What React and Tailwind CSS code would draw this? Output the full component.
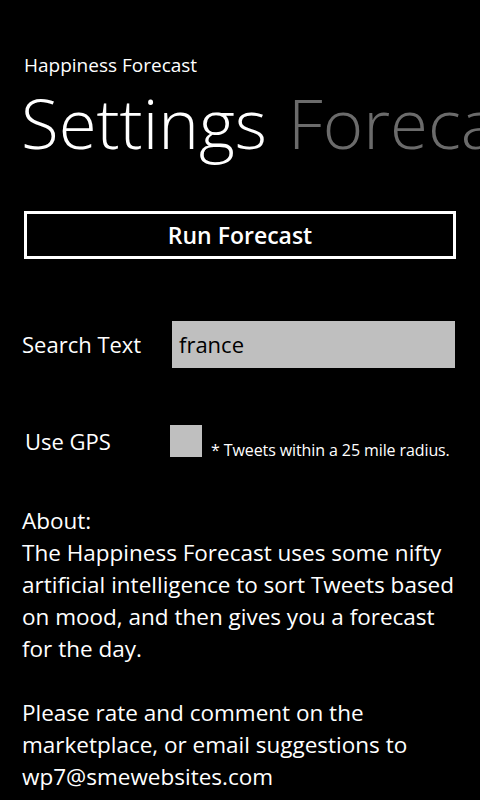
export default function App() {
  return (
    <div className="w-[480px] h-[800px] bg-black text-white overflow-hidden font-['Open_Sans',sans-serif]">
      <div className="pt-[54px] pl-[24px] text-[19px] leading-[22px]">Happiness Forecast</div>

      <div className="flex whitespace-nowrap pl-[21px] mt-[4px] text-[69px] leading-[84px] font-light">
        <span>Settings</span>
        <span className="ml-[21px] text-[#6b6b6b]">Forecast</span>
      </div>

      <div className="px-[24px] mt-[47px]">
        <div className="h-[48px] border-[3px] border-white flex items-center justify-center text-[23px] font-semibold">
          Run Forecast
        </div>
      </div>

      <div className="flex items-center mt-[62px] pl-[22px]">
        <span className="w-[150px] text-[22px]">Search Text</span>
        <div className="w-[283px] h-[47px] bg-[#bfbfbf] text-black text-[22px] flex items-center pl-[7px]">
          france
        </div>
      </div>

      <div className="flex items-center mt-[52px] pl-[25px]">
        <span className="w-[145px] text-[22px]">Use GPS</span>
        <div className="w-[32px] h-[32px] bg-[#bfbfbf]" />
        <span className="ml-[9px] mt-[18px] text-[16px] tracking-[-0.1px]">* Tweets within a 25 mile radius.</span>
      </div>

      <div className="mt-[43px] pl-[22px] text-[22.5px] leading-[32px] whitespace-nowrap">
        <p>About:</p>
        <p>
          The Happiness Forecast uses some nifty
          <br />
          artificial intelligence to sort Tweets based
          <br />
          on mood, and then gives you a forecast
          <br />
          for the day.
        </p>
        <p className="mt-[32px]">
          Please rate and comment on the
          <br />
          marketplace, or email suggestions to
          <br />
          wp7@smewebsites.com
        </p>
      </div>
    </div>
  );
}
